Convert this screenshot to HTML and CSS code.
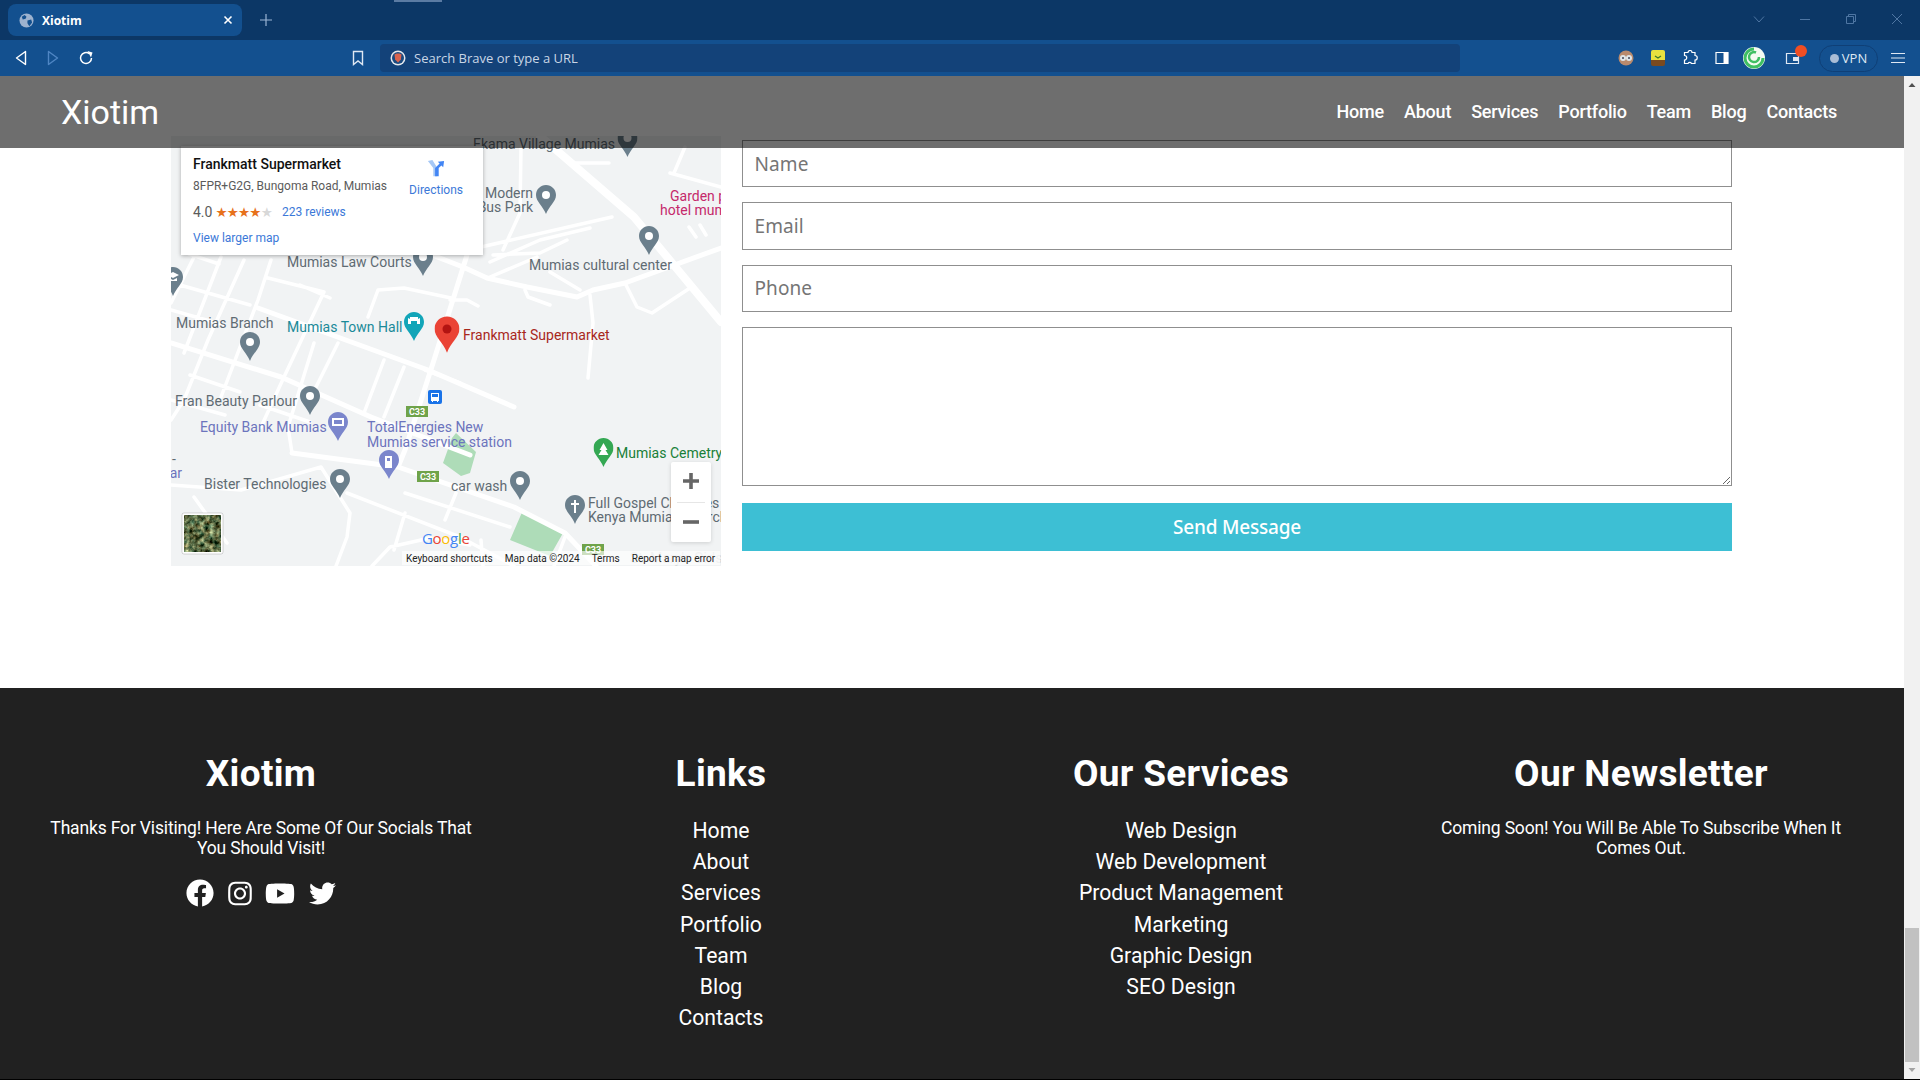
FILE: index.html
```html
<!DOCTYPE html>
<html lang="en">
<head>
<meta charset="utf-8">
<title>Xiotim</title>
<link rel="stylesheet" href="styles.css">
</head>
<body>
<div class="tabstrip">
  <span class="strip-mark"></span>
  <div class="tab">
    <svg class="globe" viewBox="0 0 16 16"><circle cx="8" cy="8" r="7.500" fill="#9db2cf"/><path d="M3 4l3-2 2 2-1 2-3 1zM9 8l4-1 1 3-3 4-2-3z" fill="#13508f"/></svg>
    <span class="tab-title">Xiotim</span>
    <svg class="tab-close" viewBox="0 0 10 10"><path d="M1.500 1.500l7 7M8.500 1.500l-7 7" stroke="#fff" stroke-width="1.600"/></svg>
  </div>
  <svg class="tab-new" viewBox="0 0 12 12"><path d="M6 0v12M0 6h12" stroke="#9bb5d4" stroke-width="1.200"/></svg>
  <div class="win-controls">
    <svg viewBox="0 0 12 12"><path d="M1 3.500l5 5.500 5-5.500" fill="none" stroke="#4f76a3"/></svg>
    <svg viewBox="0 0 12 12"><path d="M1 6.500h10" stroke="#4f76a3"/></svg>
    <svg viewBox="0 0 12 12"><path d="M1.500 3.500h7v7h-7zM3.500 3.500v-2h7v7h-2" fill="none" stroke="#4f76a3"/></svg>
    <svg viewBox="0 0 12 12"><path d="M1 1l10 10M11 1L1 11" stroke="#4f76a3"/></svg>
  </div>
</div>
<div class="toolbar">
  <div class="nav-btns">
    <svg viewBox="0 0 12 16"><path d="M10.500 1.500v13L1.500 8z" fill="none" stroke="#fff" stroke-width="1.400" stroke-linejoin="round"/></svg>
    <svg viewBox="0 0 12 16"><path d="M1.500 1.500v13l9-6.500z" fill="none" stroke="#4f86c4" stroke-width="1.400" stroke-linejoin="round"/></svg>
    <svg class="reload" viewBox="0 0 16 16"><path d="M13.500 8a5.500 5.500 0 1 1-2.200-4.400" fill="none" stroke="#fff" stroke-width="1.500"/><path d="M9.500 1l5 1.500-1.500 5z" fill="#fff"/></svg>
  </div>
  <svg class="bookmark" viewBox="0 0 12 16"><path d="M1.500 1.500h9v13L6 11l-4.500 3.500z" fill="none" stroke="#dfe8f3" stroke-width="1.400"/></svg>
  <div class="address">
    <svg class="brave" viewBox="0 0 16 16"><circle cx="8" cy="8" r="7.500" fill="#e3e7ec"/><circle cx="8" cy="8" r="6" fill="#1a4a80"/><path d="M4.500 4.500l2-1h3l2 1-.6 5L8 12.500 5.100 9.500z" fill="#d9634e"/></svg>
    <span>Search Brave or type a URL</span>
  </div>
  <div class="ext-icons">
    <svg class="ext" viewBox="0 0 16 16"><circle cx="8" cy="8" r="7.500" fill="#b98a6d"/><circle cx="5" cy="8" r="3" fill="#dfe6ea"/><circle cx="11" cy="8" r="3" fill="#dfe6ea"/><circle cx="5" cy="8" r="1" fill="#445"/><circle cx="11" cy="8" r="1" fill="#445"/></svg>
    <svg class="ext ext-tall" viewBox="0 0 16 18"><path d="M3 1h10a2 2 0 0 1 2 2v8H1V3a2 2 0 0 1 2-2z" fill="#e8e13f"/><path d="M1 11h14v4a2 2 0 0 1-2 2H3a2 2 0 0 1-2-2z" fill="#7a4a20"/><path d="M5 7l3 2 3-2" stroke="#3d7a2a" fill="none" stroke-width="1.300"/></svg>
    <svg class="ext" viewBox="0 0 16 16"><path d="M6 2.500a2 2 0 0 1 4 0h3v3a2 2 0 0 1 0 4.500v3.500H9.500a2 2 0 0 0-3.500 0H2.500V10a2 2 0 0 0 0-4.500V2.500z" fill="none" stroke="#fff" stroke-width="1.200"/></svg>
    <svg class="ext" viewBox="0 0 16 16"><path d="M2 2.500h12v11H2z" fill="none" stroke="#fff" stroke-width="1.200"/><path d="M9.500 2.500H14v11H9.500z" fill="#fff"/></svg>
    <svg class="ext ext-lg" viewBox="0 0 22 22"><circle cx="11" cy="11" r="11" fill="#f4fbf2"/><path d="M11 2a9 9 0 1 0 9 9" fill="none" stroke="#3fbf62" stroke-width="3"/><path d="M16 10a5 5 0 1 1-3-4.500" fill="none" stroke="#3fbf62" stroke-width="2.500"/></svg>
    <span class="wallet">
      <svg viewBox="0 0 16 16"><path d="M1.500 3.500h12v10h-12z" fill="none" stroke="#dfe8f3" stroke-width="1.200"/><path d="M8 7h6v4H8z" fill="#dfe8f3"/></svg>
      <i class="wallet-dot"></i>
    </span>
    <span class="vpn"><i class="vpn-dot"></i>VPN</span>
    <svg class="burger" viewBox="0 0 14 10"><path d="M0 .5h14M0 5h14M0 9.500h14" stroke="#dfe8f3"/></svg>
  </div>
</div>
<div class="viewport">
  <div class="page">
    <header class="site-header">
      <a class="logo">Xiotim</a>
      <nav class="site-nav"><a>Home</a><a>About</a><a>Services</a><a>Portfolio</a><a>Team</a><a>Blog</a><a>Contacts</a></nav>
    </header>
    <section class="contact">
      <div class="map">
        <svg class="map-canvas" viewBox="171 136 550 430">
          <defs>
            <symbol id="pin" viewBox="0 0 20 29"><path d="M10 0C4.500 0 0 4.400 0 9.900c0 6.600 7 11 10 19.100 3-8.100 10-12.500 10-19.100C20 4.400 15.500 0 10 0z"/></symbol>
            <filter id="sat" x="0" y="0" width="100%" height="100%" color-interpolation-filters="sRGB"><feTurbulence type="fractalNoise" baseFrequency="0.2" numOctaves="3" seed="4"/><feColorMatrix values="1.200 .4 0 0 -.44  1.200 .1 0 0 -.23  1 0 0 0 -.23  0 0 0 0 1"/></filter>
          </defs>
          <rect class="map-bg" x="171" y="136" width="550" height="430"/>
          <path class="park" d="M456 433L476 452 470 473 461 476 443 463 452 438zM523 510L563 533 550 556 510 540z"/>
          <path class="road road-major" d="M540 136L634 217 721 322"/>
          <path class="road road-mid" d="M721 248L625 283 593 290 577 297 527 287 487 278 463 267 427 253 400 240M258 308L428 370 514 407M171 343L281 377 371 417 470 455M292 453L398 467 514 507 565 533 596 566M467 255L434 360 405 450 398 467"/>
          <path class="road" d="M590 295L593 323 588 378M625 283L637 307 652 313 690 288M537 257L490 277M550 272L580 290M493 255L540 253 567 240M525 290L528 297 550 305M450 300L467 300 478 306M194 257L171 303M221 257L184 353M244 260L208 340 184 400 171 420M271 260L258 300 221 397M268 278L324 292 284 377 261 427M314 343L288 427 292 453M338 343L311 397M384 360L364 413M404 367L384 417M368 317L378 290 404 288 451 298M171 310L224 325M171 400L225 415M171 485L241 490 321 467 350 513 347 537 336 566M194 497L227 543M347 493L460 537 514 566M405 493L510 527M456 493L445 520M405 513L394 550M372 566L390 547 430 538 470 545M481 540L483 566M565 537L554 566M189 254L219 264M180 285L250 305M300 285L330 298M260 405L310 422M190 375L240 392M425 370L460 383M521 148L520 213 503 250M481 247L612 217M689 227L696 237M700 225L706 235M670 173L721 187M685 147L674 173M576 163L609 163M490 262L540 240 590 228"/>
          <use href="#pin" class="pin-gray" x="617.500" y="128" width="20" height="29"/>
          <use href="#pin" class="pin-gray" x="536" y="185" width="20" height="29"/>
          <use href="#pin" class="pin-gray" x="639" y="226" width="20" height="29"/>
          <use href="#pin" class="pin-gray" x="413" y="247" width="20" height="29"/>
          <use href="#pin" class="pin-gray" x="240" y="332" width="20" height="29"/>
          <use href="#pin" class="pin-gray" x="300" y="386" width="20" height="29"/>
          <use href="#pin" class="pin-gray" x="330" y="469" width="20" height="29"/>
          <use href="#pin" class="pin-gray" x="510" y="471" width="20" height="29"/>
          <use href="#pin" class="pin-gray" x="565" y="495" width="20" height="29"/>
          <use href="#pin" class="pin-gray" x="163" y="267" width="20" height="29"/>
          <use href="#pin" class="pin-purple" x="328" y="412" width="20" height="29"/>
          <use href="#pin" class="pin-purple" x="379" y="450" width="20" height="29"/>
          <use href="#pin" class="pin-green" x="593.500" y="438" width="20" height="29"/>
          <use href="#pin" class="pin-teal" x="404" y="312" width="20" height="29"/>
          <use href="#pin" class="pin-red" x="434.500" y="316" width="25" height="37"/>
          <g class="pin-glyph">
            <circle cx="627.500" cy="138" r="4"/><circle cx="546" cy="195" r="4"/><circle cx="649" cy="236" r="4"/><circle cx="423" cy="257" r="4"/><circle cx="250" cy="342" r="4"/><circle cx="310" cy="396" r="4"/><circle cx="340" cy="479" r="4"/><circle cx="520" cy="481" r="4"/>
            <path d="M574 500h2v3h3v2h-3v8h-2v-8h-3v-2h3z"/>
            <path d="M167 275l6-3 6 3-6 3zM169 278v3h8v-3l-4 2z"/>
            <path d="M332 418h12v8h-12z"/>
            <path d="M385 456h7v12h-7z"/>
            <path d="M603.500 443l4 7h-2l3 5h-10l3-5h-2z"/>
            <path d="M408 324v-6l2 1v-2h8v2l2-1v6h-3v-3h-6v3z"/>
          </g>
          <path class="pin-detail" d="M334 420h8v4h-8z"/>
          <path class="pin-detail" d="M387 458h3v3h-3z"/>
          <circle class="pin-red-dot" cx="447" cy="329" r="4.500"/>
          <g class="labels">
            <text x="473" y="149">Ekama Village Mumias</text>
            <text x="533" y="198" text-anchor="end">Modern</text>
            <text x="533" y="212" text-anchor="end">Bus Park</text>
            <text x="287" y="267">Mumias Law Courts</text>
            <text x="529" y="270">Mumias cultural center</text>
            <text x="176" y="328">Mumias Branch</text>
            <text x="175" y="406">Fran Beauty Parlour</text>
            <text x="204" y="489">Bister Technologies</text>
            <text x="451" y="491">car wash</text>
            <text x="588" y="508">Full Gospel Churches</text>
            <text x="588" y="522">Kenya Mumias Church</text>
            <text x="165" y="464">l -</text>
            <text class="label-purple" x="161" y="478">Bar</text>
            <text class="label-pink" x="670" y="201">Garden pool</text>
            <text class="label-pink" x="660" y="215">hotel mumias</text>
            <text class="label-teal" x="287" y="332">Mumias Town Hall</text>
            <text class="label-red" x="463" y="340">Frankmatt Supermarket</text>
            <text class="label-purple" x="200" y="432">Equity Bank Mumias</text>
            <text class="label-purple" x="367" y="432">TotalEnergies New</text>
            <text class="label-purple" x="367" y="447">Mumias service station</text>
            <text class="label-green" x="616" y="458">Mumias Cemetry</text>
            <text class="label-faint" x="630" y="563">St. Mary's Girls</text>
          </g>
          <g class="shields">
            <rect x="406" y="406" width="22" height="11"/><rect x="417" y="471" width="22" height="11"/><rect x="582" y="544" width="22" height="11"/>
            <text x="417" y="415">C33</text><text x="428" y="480">C33</text><text x="593" y="553">C33</text>
          </g>
          <rect class="bus" x="428" y="390" width="14" height="14" rx="2"/>
          <path class="bus-glyph" d="M431 393h8v8h-1v1h-1v-1h-4v1h-1v-1h-1z"/>
          <path class="bus" d="M432 394h6v3h-6z"/>
          <text class="google" x="422" y="544"><tspan class="g-blue">G</tspan><tspan class="g-red">o</tspan><tspan class="g-yellow">o</tspan><tspan class="g-blue">g</tspan><tspan class="g-green">l</tspan><tspan class="g-red">e</tspan></text>
          <rect class="thumb-frame" x="182" y="513" width="41" height="41" rx="2"/>
          <rect x="184" y="515" width="37" height="37" filter="url(#sat)"/>
        </svg>
        <div class="place-card">
          <div class="place-info">
            <div class="place-name">Frankmatt Supermarket</div>
            <div class="place-addr">8FPR+G2G, Bungoma Road, Mumias</div>
            <div class="place-rating"><span class="rating-num">4.0</span><span class="stars">★★★★<b>★</b></span><a class="map-link reviews">223 reviews</a></div>
            <a class="map-link">View larger map</a>
          </div>
          <div class="directions">
            <svg viewBox="0 0 20 20"><path d="M1 1l5-1 5 8v10H7V9z" fill="#a6c8f6"/><path d="M9 18V9l5-5-2-2 7-1-1 7-2-2-3 3v9z" fill="#4285f4"/></svg>
            <a class="map-link">Directions</a>
          </div>
        </div>
        <div class="zoom-ctl">
          <svg class="zoom-plus" viewBox="0 0 18 18"><path d="M9 1v16M1 9h16" stroke="#666" stroke-width="3.600"/></svg>
          <i class="zoom-rule"></i>
          <svg class="zoom-minus" viewBox="0 0 18 18"><path d="M1 9h16" stroke="#666" stroke-width="3.600"/></svg>
        </div>
        <div class="attribution"><span>Keyboard shortcuts</span><span>Map data ©2024</span><span>Terms</span><span>Report a map error</span></div>
      </div>
      <form class="contact-form">
        <input class="field" type="text" placeholder="Name">
        <input class="field" type="text" placeholder="Email">
        <input class="field" type="text" placeholder="Phone">
        <textarea class="field field-area"></textarea>
        <button class="send" type="button">Send Message</button>
      </form>
    </section>
    <footer class="footer">
      <div class="foot-col">
        <h2>Xiotim</h2>
        <p>Thanks For Visiting! Here Are Some Of Our Socials That You Should Visit!</p>
        <div class="socials">
          <svg class="s-fb" viewBox="0 0 512 512"><path d="M504 256C504 119 393 8 256 8S8 119 8 256c0 123.780 90.690 226.380 209.250 245V327.690h-63V256h63v-54.640c0-62.150 37-96.480 93.670-96.480 27.140 0 55.520 4.840 55.520 4.840v61h-31.280c-30.800 0-40.410 19.120-40.410 38.730V256h68.780l-11 71.690h-57.780V501C413.310 482.380 504 379.780 504 256z"/></svg>
          <svg class="s-ig" viewBox="0 0 448 512"><path d="M224.100 141c-63.600 0-114.900 51.300-114.900 114.900s51.300 114.900 114.900 114.900S339 319.500 339 255.900 287.700 141 224.100 141zm0 189.600c-41.100 0-74.700-33.500-74.700-74.700s33.500-74.700 74.700-74.700 74.700 33.500 74.700 74.700-33.600 74.700-74.700 74.700zm146.400-194.300c0 14.900-12 26.800-26.800 26.800-14.900 0-26.800-12-26.800-26.800s12-26.800 26.800-26.800 26.800 12 26.800 26.800zm76.100 27.200c-1.700-35.900-9.900-67.700-36.200-93.900-26.200-26.200-58-34.400-93.900-36.200-37-2.100-147.900-2.100-184.900 0-35.800 1.700-67.600 9.900-93.900 36.100s-34.400 58-36.200 93.900c-2.100 37-2.100 147.900 0 184.900 1.700 35.900 9.900 67.700 36.200 93.900s58 34.400 93.900 36.200c37 2.100 147.900 2.100 184.900 0 35.900-1.700 67.700-9.900 93.900-36.200 26.200-26.200 34.400-58 36.200-93.900 2.100-37 2.100-147.800 0-184.800zM398.800 388c-7.800 19.600-22.900 34.700-42.600 42.600-29.500 11.700-99.500 9-132.100 9s-102.700 2.600-132.100-9c-19.600-7.800-34.700-22.900-42.600-42.600-11.700-29.500-9-99.500-9-132.100s-2.600-102.700 9-132.100c7.800-19.600 22.900-34.700 42.600-42.600 29.500-11.700 99.500-9 132.100-9s102.700-2.600 132.100 9c19.600 7.800 34.700 22.900 42.600 42.600 11.700 29.500 9 99.500 9 132.100s2.700 102.700-9 132.100z"/></svg>
          <svg class="s-yt" viewBox="0 0 576 512"><path d="M549.655 124.083c-6.281-23.650-24.787-42.276-48.284-48.597C458.781 64 288 64 288 64S117.220 64 74.629 75.486c-23.497 6.322-42.003 24.947-48.284 48.597-11.412 42.867-11.412 132.305-11.412 132.305s0 89.438 11.412 132.305c6.281 23.650 24.787 41.500 48.284 47.821C117.220 448 288 448 288 448s170.780 0 213.371-11.486c23.497-6.321 42.003-24.171 48.284-47.821 11.412-42.867 11.412-132.305 11.412-132.305s0-89.438-11.412-132.305zm-317.510 213.508V175.185l142.739 81.205-142.739 81.201z"/></svg>
          <svg class="s-tw" viewBox="0 0 512 512"><path d="M459.370 151.716c.325 4.548.325 9.097.325 13.645 0 138.720-105.583 298.558-298.558 298.558-59.452 0-114.680-17.219-161.137-47.106 8.447.974 16.568 1.299 25.340 1.299 49.055 0 94.213-16.568 130.274-44.832-46.132-.975-84.792-31.188-98.112-72.772 6.498.974 12.995 1.624 19.818 1.624 9.421 0 18.843-1.300 27.614-3.573-48.081-9.747-84.143-51.980-84.143-102.985v-1.299c13.969 7.797 30.214 12.670 47.431 13.319-28.264-18.843-46.781-51.005-46.781-87.391 0-19.492 5.197-37.360 14.294-52.954 51.655 63.675 129.300 105.258 216.365 109.807-1.624-7.797-2.599-15.918-2.599-24.040 0-57.828 46.782-104.934 104.934-104.934 30.213 0 57.502 12.670 76.670 33.137 23.715-4.548 46.456-13.320 66.599-25.340-7.798 24.366-24.366 44.833-46.132 57.827 21.117-2.273 41.584-8.122 60.426-16.243-14.292 20.791-32.161 39.308-52.628 54.253z"/></svg>
        </div>
      </div>
      <div class="foot-col">
        <h2>Links</h2>
        <ul><li>Home</li><li>About</li><li>Services</li><li>Portfolio</li><li>Team</li><li>Blog</li><li>Contacts</li></ul>
      </div>
      <div class="foot-col">
        <h2>Our Services</h2>
        <ul><li>Web Design</li><li>Web Development</li><li>Product Management</li><li>Marketing</li><li>Graphic Design</li><li>SEO Design</li></ul>
      </div>
      <div class="foot-col">
        <h2>Our Newsletter</h2>
        <p>Coming Soon! You Will Be Able To Subscribe When It Comes Out.</p>
      </div>
    </footer>
  </div>
  <aside class="scrollbar">
    <svg class="sb-arrow" viewBox="0 0 16 17"><path d="M4.500 11L8 7l3.500 4z" fill="#505050"/></svg>
    <div class="sb-thumb"></div>
    <svg class="sb-arrow" viewBox="0 0 16 17"><path d="M4.500 6L8 10l3.500-4z" fill="#a3a3a3"/></svg>
  </aside>
</div>
</body>
</html>
```

FILE: styles.css
```css
* { box-sizing: border-box; }
html, body { margin: 0; height: 1080px; overflow: hidden; }
body { background: #000; font-family: "Roboto", "Noto Sans", sans-serif; }

.tabstrip { position: relative; height: 40px; background: #0c3766; display: flex; align-items: flex-start; padding: 4px 0 0 8px; }
.strip-mark { position: absolute; left: 394px; top: 0; width: 48px; height: 2px; background: #5b7ba3; }
.tab { width: 234px; height: 32px; background: #13508f; border-radius: 8px; display: flex; align-items: center; padding: 0 9px 0 11px; }
.globe { width: 15px; height: 15px; }
.tab-title { margin-left: 8px; flex: 1; color: #fff; font: 700 12px "Open Sans", sans-serif; }
.tab-close { width: 10px; height: 10px; }
.tab-new { width: 12px; height: 12px; margin: 10px 0 0 18px; }
.win-controls { margin-left: auto; display: flex; gap: 34px; padding: 9px 17px 0 0; }
.win-controls svg { width: 12px; height: 12px; }

.toolbar { height: 36px; background: #13508f; display: flex; align-items: center; padding-left: 15px; }
.nav-btns { display: flex; align-items: center; gap: 19.500px; width: 337px; }
.nav-btns svg { width: 12px; height: 16px; }
.nav-btns .reload { width: 16px; }
.bookmark { width: 12px; height: 16px; margin-right: 16px; }
.address { width: 1080px; height: 28px; background: #134279; border-radius: 4px; display: flex; align-items: center; gap: 8px; padding-left: 10px; color: #c9d6e6; font: 13px "Open Sans", sans-serif; }
.brave { width: 16px; height: 16px; }
.ext-icons { display: flex; align-items: center; margin-left: 158px; }
.ext { width: 16px; height: 16px; margin-right: 16px; }
.ext-tall { height: 18px; }
.ext-lg { width: 22px; height: 22px; margin: 0 20px 0 -3px; }
.wallet { position: relative; width: 16px; height: 16px; margin-right: 18px; }
.wallet svg { width: 16px; height: 16px; display: block; }
.wallet-dot { position: absolute; left: 10px; top: -5px; width: 12px; height: 12px; border-radius: 50%; background: #f04e23; }
.vpn { width: 59px; height: 27px; border: 1px solid #0f3f76; border-radius: 14px; display: flex; align-items: center; justify-content: center; gap: 3px; color: #dfe8f3; font: 500 13px "Open Sans", sans-serif; margin-right: 13px; }
.vpn-dot { width: 9px; height: 9px; border-radius: 50%; background: #a9bdd6; }
.burger { width: 14px; height: 10px; }

.viewport { display: flex; height: 1003px; }
.page { position: relative; flex: 1; min-width: 0; background: #fff; }
.scrollbar { width: 16px; background: #f1f1f1; display: flex; flex-direction: column; }
.sb-arrow { width: 16px; height: 17px; flex: none; }
.sb-thumb { width: 14px; height: 134px; margin: auto 0 0 1px; background: #c1c1c1; }

.site-header { position: absolute; z-index: 5; left: 0; right: 0; top: 0; height: 72px; background: rgba(0, 0, 0, .57); display: flex; align-items: center; justify-content: space-between; padding: 0 67px 0 61px; color: #fff; }
.logo { font-size: 34px; }
.site-nav { display: flex; gap: 20px; font-size: 18px; font-weight: 500; letter-spacing: -.22px; margin-bottom: 2px; }

.contact { display: flex; align-items: flex-start; gap: 21px; height: 612px; padding: 60px 0 0 171px; }
.map { position: relative; width: 550px; height: 430px; overflow: hidden; flex: none; }
.map-canvas { display: block; width: 550px; height: 430px; }
.map-bg { fill: #f1f3f4; }
.park { fill: #aedcb8; }
.road { fill: none; stroke: #fff; stroke-width: 3.500; stroke-linecap: round; stroke-linejoin: round; }
.road-mid { stroke-width: 5; }
.road-major { stroke-width: 8; }
.pin-gray { fill: #6b7f8c; }
.pin-purple { fill: #7b86cc; }
.pin-green { fill: #34a853; }
.pin-teal { fill: #12a5b8; }
.pin-red { fill: #ea4335; }
.pin-red-dot { fill: #b31412; }
.pin-glyph { fill: #fff; }
.pin-detail { fill: #7b86cc; }
.labels text { font: 14px "Roboto", sans-serif; fill: #5f6b73; }
.labels .label-purple { fill: #6c74bd; }
.labels .label-pink { fill: #c5296b; }
.labels .label-teal { fill: #1a8a99; }
.labels .label-red { fill: #a8271c; }
.labels .label-green { fill: #188038; }
.labels .label-faint { fill: #d5d8da; }
.shields rect { fill: #6fa34a; }
.shields text { font: 700 9px "Roboto", sans-serif; fill: #fff; text-anchor: middle; }
.bus { fill: #1a73e8; }
.bus-glyph { fill: #fff; }
.google { font: 500 15px "Open Sans", sans-serif; letter-spacing: -.3px; }
.g-blue { fill: #4285f4; }
.g-red { fill: #ea4335; }
.g-yellow { fill: #fbbc05; }
.g-green { fill: #34a853; }
.thumb-frame { fill: #fff; stroke: rgba(0, 0, 0, .15); stroke-width: 1; }

.place-card { position: absolute; left: 10px; top: 10px; width: 302px; height: 109px; background: #fff; box-shadow: 0 1px 4px rgba(0, 0, 0, .3); display: flex; padding: 8px 20px 0 12px; font-family: "Roboto", sans-serif; font-size: 12px; color: #5b5b5b; }
.place-info { flex: 1; display: flex; flex-direction: column; align-items: flex-start; }
.place-name { font-size: 14px; font-weight: 500; color: #111; line-height: 20px; }
.place-addr { margin-top: 3px; line-height: 18px; white-space: nowrap; }
.place-rating { margin-top: 8px; display: flex; align-items: center; line-height: 18px; }
.rating-num { font-size: 14px; }
.stars { margin-left: 3px; font: 13.500px "DejaVu Sans", sans-serif; color: #e7711b; letter-spacing: -.8px; }
.stars b { font-weight: 400; color: #d8d8d8; }
.reviews { margin-left: 10px; }
.map-link { color: #3b78d8; white-space: nowrap; line-height: 18px; }
.place-rating + .map-link { margin-top: 8px; }
.directions { display: flex; flex-direction: column; align-items: center; padding-top: 6px; gap: 3px; }
.directions svg { width: 18px; height: 18px; }
.zoom-ctl { position: absolute; left: 500px; top: 326px; width: 40px; height: 80px; background: #fff; box-shadow: 0 1px 4px rgba(0, 0, 0, .15); border-radius: 2px; display: flex; flex-direction: column; align-items: center; }
.zoom-ctl svg { width: 18px; height: 18px; flex: none; }
.zoom-plus { margin: 10px 0 12px; }
.zoom-minus { margin-top: 10px; }
.zoom-rule { width: 28px; height: 1px; background: #e6e6e6; flex: none; }
.attribution { position: absolute; right: 1px; bottom: 1px; height: 14px; width: 318px; background: rgba(255, 255, 255, .65); display: flex; gap: 12px; align-items: center; padding-left: 4px; font: 10px "Roboto", sans-serif; color: #222; white-space: nowrap; }

.contact-form { width: 990px; margin-top: 4px; display: flex; flex-direction: column; gap: 15px; }
.field { width: 100%; height: 47.400px; border: 1px solid #8f8f8f; border-radius: 0; padding: 0 11.500px; font: 19px "Noto Sans", sans-serif; letter-spacing: .1px; background: #fff; }
.field::placeholder { color: #757575; }
.field-area { height: 159px; display: block; }
.send { height: 48px; margin-top: 2px; border: 0; background: #3dbfd4; color: #fff; font: 500 19px "Noto Sans", sans-serif; letter-spacing: -.2px; }

.footer { height: 391px; background: #212121; color: #fff; display: grid; grid-template-columns: repeat(4, 1fr); padding: 64px 33px 0 31px; text-align: center; }
.foot-col { padding: 0 14px; }
.foot-col h2 { margin: 0 0 19px; font-size: 37px; font-weight: 700; line-height: 44px; letter-spacing: .3px; }
.foot-col p { margin: 0; padding-top: 3px; font-size: 17.500px; font-weight: 400; line-height: 20px; letter-spacing: -.16px; }
.foot-col ul { margin: 0; padding: 0; list-style: none; font-size: 21.200px; line-height: 31.200px; }
.socials { display: flex; justify-content: center; align-items: center; gap: 13.500px; margin-top: 21px; }
.socials svg { fill: #fff; display: block; }
.s-fb { width: 28px; height: 28px; }
.s-ig { width: 24px; height: 27px; }
.s-yt { width: 30px; height: 27px; }
.s-tw { width: 27px; height: 27px; }
```
